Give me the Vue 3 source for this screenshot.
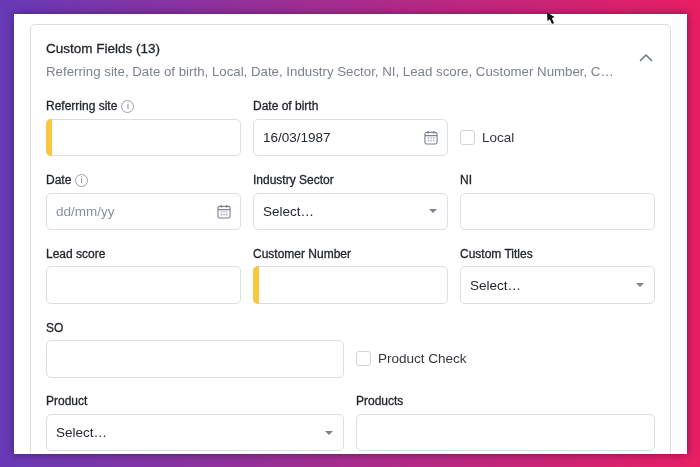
<template>
  <div class="page">
    <div class="panel">
      <section class="card">
        <header class="card-head">
          <div class="head-text">
            <h2>Custom Fields (13)</h2>
            <p>Referring site, Date of birth, Local, Date, Industry Sector, NI, Lead score, Customer Number, C…</p>
          </div>
          <svg class="chevron" width="14" height="9" viewBox="0 0 14 9" fill="none">
            <path d="M1.500 7.500 7 2l5.500 5.500" stroke="#6b7280" stroke-width="1.500" stroke-linecap="round" stroke-linejoin="round" />
          </svg>
        </header>

        <div class="rows">
          <div class="row three">
            <div class="field">
              <label>Referring site <span class="info">i</span></label>
              <div class="input required"></div>
            </div>
            <div class="field">
              <label>Date of birth</label>
              <div class="input">
                <span class="value">16/03/1987</span>
                <svg class="cal" width="14" height="15" viewBox="0 0 15 16" fill="none">
                  <rect x="1" y="2.500" width="13" height="12.500" rx="2" stroke="#7b8290" stroke-width="1.200" />
                  <path d="M1 6h13M4.500 1v3M10.500 1v3" stroke="#7b8290" stroke-width="1.200" />
                  <path d="M4 8.500h1.500M6.800 8.500h1.500M9.600 8.500h1.500M4 11.500h1.500M6.800 11.500h1.500M9.600 11.500h1.500" stroke="#7b8290" stroke-width="1.200" />
                </svg>
              </div>
            </div>
            <div class="check">
              <span class="box"></span>
              <span>Local</span>
            </div>
          </div>

          <div class="row three">
            <div class="field">
              <label>Date <span class="info">i</span></label>
              <div class="input">
                <span class="placeholder">dd/mm/yy</span>
                <svg class="cal" width="14" height="15" viewBox="0 0 15 16" fill="none">
                  <rect x="1" y="2.500" width="13" height="12.500" rx="2" stroke="#7b8290" stroke-width="1.200" />
                  <path d="M1 6h13M4.500 1v3M10.500 1v3" stroke="#7b8290" stroke-width="1.200" />
                  <path d="M4 8.500h1.500M6.800 8.500h1.500M9.600 8.500h1.500M4 11.500h1.500M6.800 11.500h1.500M9.600 11.500h1.500" stroke="#7b8290" stroke-width="1.200" />
                </svg>
              </div>
            </div>
            <div class="field">
              <label>Industry Sector</label>
              <div class="input">
                <span class="value">Select…</span>
                <span class="caret"></span>
              </div>
            </div>
            <div class="field">
              <label>NI</label>
              <div class="input"></div>
            </div>
          </div>

          <div class="row three">
            <div class="field">
              <label>Lead score</label>
              <div class="input"></div>
            </div>
            <div class="field">
              <label>Customer Number</label>
              <div class="input required"></div>
            </div>
            <div class="field">
              <label>Custom Titles</label>
              <div class="input">
                <span class="value">Select…</span>
                <span class="caret"></span>
              </div>
            </div>
          </div>

          <div class="row two">
            <div class="field">
              <label>SO</label>
              <div class="input"></div>
            </div>
            <div class="check">
              <span class="box"></span>
              <span>Product Check</span>
            </div>
          </div>

          <div class="row two">
            <div class="field">
              <label>Product</label>
              <div class="input">
                <span class="value">Select…</span>
                <span class="caret"></span>
              </div>
            </div>
            <div class="field">
              <label>Products</label>
              <div class="input"></div>
            </div>
          </div>
        </div>
      </section>
    </div>

    <!-- screen recording pointer -->
    <svg class="pointer" width="10" height="13" viewBox="0 0 10 13">
      <path d="M1 0.500 8.500 5 5.800 6.200 8 11 6 12 3.800 7.300 1.500 9z" fill="#111" />
    </svg>
  </div>
</template>

<script setup>
</script>

<style>
html, body {
  margin: 0;
  background: #673ab7;
}
</style>

<style scoped>
.page {
  position: relative;
  width: 700px;
  height: 467px;
  padding: 13.500px 13.500px 13px 13.500px;
  box-sizing: border-box;
  overflow: hidden;
  background: linear-gradient(90deg, #673ab7, #e91e63);
  font-family: "Liberation Sans", Arial, sans-serif;
  color: #1f2328;
}

.panel {
  height: 100%;
  padding: 10px 15.500px 0 16.500px;
  box-sizing: border-box;
  overflow: hidden;
  background: #fff;
  box-shadow: 0 0 8px rgba(30, 10, 50, 0.5);
  filter: blur(0.3px);
}

.card {
  height: 460px;
  padding: 15px 15px 0 15px;
  box-sizing: border-box;
  background: #fff;
  border: 1px solid #dcdfe4;
  border-radius: 5px;
}

.card-head {
  display: flex;
  align-items: center;
  justify-content: space-between;
  height: 42px;
  margin-bottom: 15.250px;
}

.head-text {
  min-width: 0;
}

h2 {
  margin: 0 0 7px;
  font-size: 13.500px;
  line-height: 16px;
  font-weight: 400;
  -webkit-text-stroke: 0.3px #1f2328;
  color: #1f2328;
}

p {
  margin: 0;
  font-size: 13.280px;
  line-height: 16px;
  color: #7b828e;
  white-space: nowrap;
}

.chevron {
  flex: none;
  margin-right: 2px;
  margin-bottom: 6px;
}

.rows {
  display: flex;
  flex-direction: column;
  gap: 14.250px;
}

.row {
  display: grid;
  gap: 12px;
}

.three {
  grid-template-columns: repeat(3, 195px);
}

.two {
  grid-template-columns: 298px 299px;
}

.field {
  display: flex;
  flex-direction: column;
}

label {
  display: flex;
  align-items: center;
  gap: 4px;
  height: 19px;
  margin-bottom: 3px;
  font-size: 12px;
  -webkit-text-stroke: 0.3px #1f2328;
}

.info {
  display: flex;
  align-items: center;
  justify-content: center;
  width: 11px;
  height: 11px;
  border: 1px solid #9a9fa8;
  border-radius: 50%;
  font-size: 9px;
  color: #6b7280;
  -webkit-text-stroke: 0;
}

.input {
  position: relative;
  display: flex;
  align-items: center;
  justify-content: space-between;
  height: 37.500px;
  padding: 0 9px;
  box-sizing: border-box;
  background: #fff;
  border: 1px solid #dcdfe4;
  border-radius: 5px;
  font-size: 13.500px;
}

.required::before {
  content: "";
  position: absolute;
  left: -1px;
  top: -1px;
  bottom: -1px;
  width: 6px;
  background: #f9c83f;
  border-radius: 5px 0 0 5px;
}

.value {
  color: #24282e;
}

.placeholder {
  color: #8a909b;
}

.caret {
  width: 0;
  height: 0;
  margin-right: 1px;
  border-left: 4px solid transparent;
  border-right: 4px solid transparent;
  border-top: 4px solid #7b828e;
}

.cal {
  flex: none;
}

.check {
  display: flex;
  align-items: center;
  gap: 7px;
  align-self: end;
  height: 37.500px;
  font-size: 13.500px;
  color: #33373d;
}

.box {
  width: 13px;
  height: 13px;
  background: #fff;
  border: 1px solid #d2d5da;
  border-radius: 3px;
}

.pointer {
  position: absolute;
  left: 546px;
  top: 12px;
}
</style>
